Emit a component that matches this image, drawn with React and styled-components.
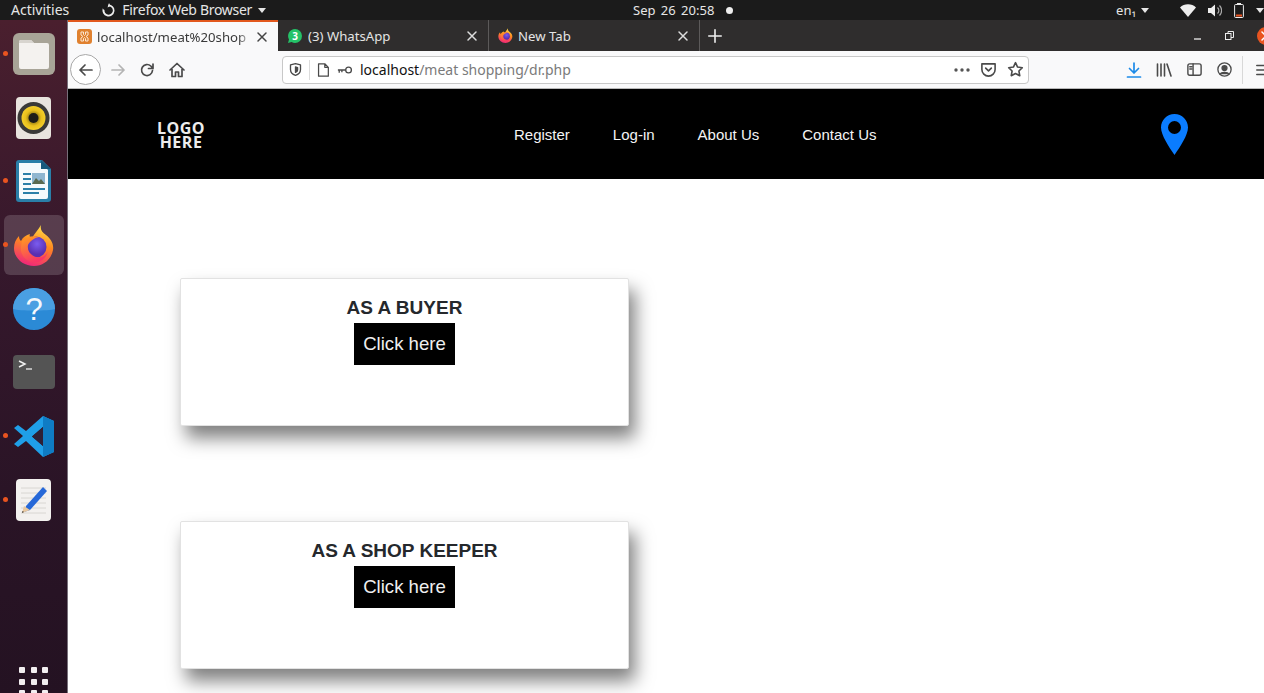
import React from 'react';
import styled, { createGlobalStyle } from 'styled-components';

const GlobalStyle = createGlobalStyle`
  html, body {
    margin: 0;
    padding: 0;
    height: 100%;
    overflow: hidden;
    background: #fff;
  }
  #root {
    height: 693px;
  }
`;

const uiFont = `"Noto Sans", "Open Sans", sans-serif`;
const pageFont = `"Liberation Sans", Arial, sans-serif`;

const Desktop = styled.div`
  width: 1264px;
  height: 693px;
  display: grid;
  grid-template-columns: minmax(0, 1fr);
  grid-template-rows: 20px 1fr;
  overflow: hidden;
`;

/* gnome top bar */
const TopBar = styled.div`
  display: grid;
  grid-template-columns: 633px auto 1fr;
  align-items: center;
  background: #1b1b1b;
  color: #e6e6e6;
  font: 13px/20px ${uiFont};
`;

const TopLeft = styled.div`
  display: flex;
  align-items: center;
  padding-left: 11px;
  font-size: 14px;
`;

const AppMenu = styled.div`
  display: flex;
  align-items: center;
  gap: 6px;
  margin-left: 32px;
  letter-spacing: -0.3px;
`;

const Caret = styled.span`
  width: 0;
  height: 0;
  border-left: 4.5px solid transparent;
  border-right: 4.5px solid transparent;
  border-top: 5px solid #e6e6e6;
`;

const Clock = styled.div`
  display: flex;
  align-items: center;
  gap: 12px;
  word-spacing: 2px;
`;

const RecDot = styled.span`
  width: 7px;
  height: 7px;
  border-radius: 50%;
  background: #eee;
`;

const TopRight = styled.div`
  display: flex;
  align-items: center;
  justify-content: flex-end;
  white-space: nowrap;
`;

const Lang = styled.div`
  display: flex;
  align-items: center;
  gap: 5px;
  margin-right: 31px;
`;

const Tray = styled.div`
  display: flex;
  align-items: center;
  gap: 12px;
`;

const Body = styled.div`
  display: grid;
  grid-template-columns: 67px minmax(0, 1fr);
  min-height: 0;
`;

/* launcher */
const Dock = styled.div`
  position: relative;
  display: flex;
  flex-direction: column;
  align-items: center;
  padding-top: 4px;
  background: linear-gradient(180deg, #4a1f2e 0%, #36182c 35%, #2a1426 70%, #241222 100%);
  border-right: 1px solid #77707a;
  box-sizing: content-box;
  width: 67px;
  margin-right: -1px;
`;

const DockItem = styled.div`
  position: relative;
  width: 60px;
  height: 60px;
  margin-bottom: 3.7px;
  display: flex;
  align-items: center;
  justify-content: center;
  border-radius: 6px;
  background: ${p => (p.$active ? 'rgba(255,255,255,0.16)' : 'transparent')};
`;

const RunDot = styled.span`
  position: absolute;
  left: -1px;
  top: 27px;
  width: 5px;
  height: 5px;
  border-radius: 50%;
  background: #e95420;
`;

const AppGrid = styled.div`
  position: absolute;
  left: 19px;
  top: 647px;
  display: grid;
  grid-template-columns: repeat(3, 6px);
  gap: 5.5px;
`;

const AppGridDot = styled.span`
  width: 6px;
  height: 6px;
  border-radius: 1px;
  background: #f2eef0;
`;

const Browser = styled.div`
  display: grid;
  grid-template-columns: minmax(0, 1fr);
  grid-template-rows: 31px 38px 90px 1fr;
  min-width: 0;
  background: #fff;
  z-index: 1;
  margin-left: 1px;
  overflow: hidden;
`;

/* tab strip */
const TabStrip = styled.div`
  display: flex;
  align-items: stretch;
  background: #2f2d2d;
  color: #e4e4e4;
  font: 13px ${uiFont};
`;

const Tab = styled.div`
  position: relative;
  box-sizing: border-box;
  width: ${p => p.$w}px;
  display: flex;
  align-items: center;
  gap: 5px;
  padding: 0 10px 0 9px;
  background: ${p => (p.$active ? '#f9f9fa' : 'transparent')};
  color: ${p => (p.$active ? '#3a3a3a' : '#e4e4e4')};
  border-top: ${p => (p.$active ? '2px solid #e2581d' : '0')};
  border-right: ${p => (p.$active ? '0' : '1px solid #5c5a5a')};
`;

const TabTitle = styled.span`
  flex: 1;
  min-width: 0;
  white-space: nowrap;
  overflow: hidden;
  font-size: 13.2px;
  mask-image: ${p => (p.$fade ? 'linear-gradient(90deg, #000 92%, transparent)' : 'none')};
`;

const NewTabButton = styled.div`
  width: 30px;
  display: flex;
  align-items: center;
  justify-content: center;
`;

const WindowControls = styled.div`
  margin-left: auto;
  display: flex;
  align-items: center;
  gap: 23px;
  margin-right: -11px;
`;

const CloseDot = styled.span`
  width: 18px;
  height: 18px;
  border-radius: 50%;
  background: #e95420;
  display: flex;
  align-items: center;
  justify-content: center;
`;

/* nav toolbar */
const Toolbar = styled.div`
  display: flex;
  align-items: center;
  background: #f9f9fa;
  border-bottom: 1px solid #b8b8b8;
  box-sizing: border-box;
  padding-left: 2px;
  height: 38px;
`;

const BackButton = styled.div`
  box-sizing: border-box;
  width: 31px;
  height: 31px;
  flex: none;
  border: 1px solid #a8a8a8;
  border-radius: 50%;
  background: #fff;
  display: flex;
  align-items: center;
  justify-content: center;
`;

const ToolButton = styled.div`
  width: ${p => p.$w || 30}px;
  flex: none;
  display: flex;
  align-items: center;
  justify-content: center;
`;

const UrlBar = styled.div`
  box-sizing: border-box;
  width: 747px;
  height: 28px;
  flex: none;
  margin-left: 88px;
  display: flex;
  align-items: center;
  background: #fff;
  border: 1px solid #c8c8c8;
  border-radius: 4px;
  padding: 0 4px 0 5px;
  font: 14px ${uiFont};
  color: #7a7a7a;
`;

const UrlDivider = styled.span`
  width: 1px;
  height: 20px;
  background: #dcdcdc;
  margin: 0 5px 0 6px;
`;

const KeyIcon = styled.svg`
  margin-left: 6px;
`;

const UrlText = styled.div`
  flex: 1;
  margin-left: 7px;
  white-space: nowrap;
`;

const UrlHost = styled.span`
  color: #111;
`;

const UrlActions = styled.div`
  display: flex;
  align-items: center;
  gap: 10px;
`;

const ToolbarRight = styled.div`
  display: flex;
  align-items: center;
  flex: none;
  margin-left: 90px;
`;

const ToolbarSep = styled.span`
  width: 1px;
  height: 28px;
  background: #d8d8d8;
  margin: 0 12px 0 3px;
`;

/* the site itself */
const SiteNav = styled.header`
  display: flex;
  align-items: center;
  background: #000;
  padding: 0 76px 0 89px;
`;

const Logo = styled.div`
  width: 357px;
  padding-top: 2px;
  color: #ececec;
  font: 700 16px/14px "Open Sans", ${pageFont};
  letter-spacing: 0.5px;
`;

const LogoLine = styled.div`
  width: 48px;
  text-align: center;
`;

const NavLinks = styled.nav`
  display: flex;
  gap: 43px;
`;

const NavLink = styled.a`
  color: #f4f4f4;
  font: 15px ${pageFont};
  text-decoration: none;
`;

const PinWrap = styled.div`
  margin-left: auto;
  display: flex;
`;

const Content = styled.main`
  display: flex;
  flex-direction: column;
  gap: 95px;
  padding: 99px 0 0 112px;
  background: #fff;
`;

const Card = styled.section`
  box-sizing: border-box;
  width: 449px;
  height: 148px;
  flex: none;
  padding-top: 17px;
  background: #fff;
  border: 1px solid #e2e2e2;
  border-radius: 2px;
  box-shadow: 6px 12px 18px rgba(0, 0, 0, 0.5);
  display: flex;
  flex-direction: column;
  align-items: center;
`;

const CardTitle = styled.h3`
  margin: 0 0 4px;
  color: #25282c;
  font: 700 19px/23px ${pageFont};
`;

const CardButton = styled.a`
  box-sizing: border-box;
  width: 101px;
  height: 42px;
  display: flex;
  align-items: center;
  justify-content: center;
  background: #000;
  color: #efefef;
  font: 18.6px ${pageFont};
  text-decoration: none;
`;

const stroke = { fill: 'none', strokeLinecap: 'round', strokeLinejoin: 'round' };

const FilesIcon = () => (
  <svg width="42" height="42" viewBox="0 0 42 42">
    <rect x="0" y="0" width="42" height="42" rx="6" fill="#a8a497" />
    <path d="M6 9a2 2 0 0 1 2-2h10l3 3h13a2 2 0 0 1 2 2v22a2 2 0 0 1-2 2H8a2 2 0 0 1-2-2z" fill="#f4f2ef" />
    <path d="M6 9a2 2 0 0 1 2-2h10l3 3H6z" fill="#d8d5cf" />
  </svg>
);

const RhythmboxIcon = () => (
  <svg width="36" height="42" viewBox="0 0 36 42">
    <defs>
      <radialGradient id="speakerCone">
        <stop offset="0.3" stopColor="#8c7414" />
        <stop offset="0.65" stopColor="#e8bf1c" />
        <stop offset="1" stopColor="#f4cf2a" />
      </radialGradient>
    </defs>
    <rect width="35" height="42" rx="4" fill="#e8e4de" />
    <circle cx="17.5" cy="21" r="16" fill="#3a3a38" />
    <circle cx="17.5" cy="21" r="12" fill="url(#speakerCone)" />
    <circle cx="17.5" cy="21" r="5" fill="#1d1c18" />
  </svg>
);

const WriterIcon = () => (
  <svg width="36" height="42" viewBox="0 0 36 42">
    <path d="M3 0h23l9 9v30a3 3 0 0 1-3 3H3a3 3 0 0 1-3-3V3a3 3 0 0 1 3-3z" fill="#2a7fa8" />
    <path d="M3 3h22l7 7v27a2 2 0 0 1-2 2H5a2 2 0 0 1-2-2z" fill="#f5fafc" />
    <path d="M25 0l10 9h-10z" fill="#17587c" />
    <path d="M7 14h8M7 19h8M7 24h8M7 29h22M7 33h16" stroke="#2a7fa8" strokeWidth="2" />
    <rect x="16" y="13" width="13" height="11" fill="#8fb6d0" />
    <path d="M16 24l4-6 3 3 2-2 4 5z" fill="#5a6a50" />
  </svg>
);

const FirefoxIcon = ({ size = 42 }) => (
  <svg width={size} height={size} viewBox="0 0 42 42">
    <defs>
      <linearGradient id="foxBody" x1="0.7" y1="0" x2="0.4" y2="1">
        <stop offset="0" stopColor="#ffe14a" />
        <stop offset="0.45" stopColor="#ff8a1f" />
        <stop offset="1" stopColor="#f0267a" />
      </linearGradient>
      <linearGradient id="foxHead" x1="0.2" y1="0" x2="0.6" y2="1">
        <stop offset="0" stopColor="#ff9a20" />
        <stop offset="1" stopColor="#f8306c" />
      </linearGradient>
      <radialGradient id="foxCore" cx="0.55" cy="0.35">
        <stop offset="0" stopColor="#7a5cf0" />
        <stop offset="1" stopColor="#5a2fb0" />
      </radialGradient>
    </defs>
    <path d="M28 1C27 6 29 8 33 11C38 15 41 20 40 26C38 36 30 42 21 42C10 42 1 34 1 24C1 19 3 15 6 12C6 15 7 16 8 17C10 13 13 11 17 10C16 12 17 14 19 14C22 9 25 6 28 1Z" fill="url(#foxBody)" />
    <circle cx="23" cy="23" r="10.5" fill="url(#foxCore)" />
    <path d="M9 17C13 13 20 11 26 13C21 14 17 17 15 21C14 26 17 31 23 33C28 34.5 33 32 35 27C33 36 26 39 20 38C12 37 7 30 8 23Z" fill="url(#foxHead)" />
  </svg>
);

const HelpIcon = () => (
  <svg width="42" height="42" viewBox="0 0 42 42">
    <circle cx="21" cy="21" r="21" fill="#2b8ad6" />
    <path d="M0 21a21 21 0 0 1 42 0c-6 2-36 2-42 0z" fill="#4a9fe2" />
    <text x="21" y="32" textAnchor="middle" fontFamily="Liberation Sans" fontSize="31" fill="#f4f8fc">?</text>
  </svg>
);

const TerminalIcon = () => (
  <svg width="42" height="34" viewBox="0 0 42 34">
    <rect width="42" height="34" rx="4" fill="#545454" />
    <path d="M6 6l6 3-6 3" stroke="#f0f0f0" strokeWidth="1.5" fill="none" />
    <path d="M13 14h6" stroke="#d8d8d8" strokeWidth="1.5" />
  </svg>
);

const VsCodeIcon = () => (
  <svg width="40" height="41" viewBox="0 0 40 41">
    <path d="M29 0l11 5v31l-11 5-17-16-8 6-4-3 9-8-9-8 4-3 8 6zM29 11L18 20.5 29 30z" fill="#1f9fe8" fillRule="evenodd" />
    <path d="M29 0l11 5v31l-11 5z M29 11v19" fill="#0f7cc4" fillRule="evenodd" />
    <path d="M29 11v19L18 20.5z" fill="#2f2036" />
  </svg>
);

const EditorIcon = () => (
  <svg width="35" height="42" viewBox="0 0 35 42">
    <rect width="35" height="42" rx="4" fill="#f3f1ef" />
    <path d="M5 9h25M5 14h25M5 19h25M5 24h25M5 29h25M5 34h25" stroke="#d8d6d2" strokeWidth="1" />
    <path d="M27 8l4 4-17 19-6 2 2-6z" fill="#2668d8" />
    <path d="M8 27l6 4-8 3z" fill="#e8c8a0" />
    <path d="M6.5 32l1.5 1-2 1z" fill="#333" />
  </svg>
);

const WhatsAppIcon = () => (
  <svg width="16" height="16" viewBox="0 0 16 16">
    <path d="M8 1a7 7 0 0 1 0 14 7 7 0 0 1-3.4-.9L1 15l1-3.5A7 7 0 0 1 8 1z" fill="#25c268" />
    <text x="8" y="11.5" textAnchor="middle" fontFamily="Noto Sans" fontWeight="700" fontSize="10" fill="#fff">3</text>
  </svg>
);

const XamppIcon = () => (
  <svg width="15" height="15" viewBox="0 0 15 15">
    <rect width="15" height="15" rx="3" fill="#e0812f" />
    <path d="M4 3h2.5v2.5L7.5 6.500 8.500 5.500V3H11v3l-2 1.500 2 1.500v3H8.500V9.500l-1-1-1 1V12H4V9l2-1.500L4 6z" fill="none" stroke="#fbe8d4" strokeWidth="1" />
  </svg>
);

const CloseX = ({ color }) => (
  <svg width="12" height="12" viewBox="0 0 12 12" stroke={color} strokeWidth="1.5" {...stroke}>
    <path d="M2 2l8 8M10 2l-8 8" />
  </svg>
);

const ToolIcon = ({ size = 18, color = '#4a4a4a', sw = 1.7, children }) => (
  <svg width={size} height={size} viewBox="0 0 18 18" stroke={color} strokeWidth={sw} {...stroke}>
    {children}
  </svg>
);

const dockApps = [
  { icon: <FilesIcon />, running: true },
  { icon: <RhythmboxIcon /> },
  { icon: <WriterIcon />, running: true },
  { icon: <FirefoxIcon />, running: true, active: true },
  { icon: <HelpIcon /> },
  { icon: <TerminalIcon /> },
  { icon: <VsCodeIcon />, running: true },
  { icon: <EditorIcon />, running: true },
];

const navItems = ['Register', 'Log-in', 'About Us', 'Contact Us'];
const cards = ['AS A BUYER', 'AS A SHOP KEEPER'];

export default function App() {
  return (
    <Desktop>
      <GlobalStyle />
      <TopBar>
        <TopLeft>
          Activities
          <AppMenu>
            <svg width="15" height="15" viewBox="0 0 15 15">
              <path d="M7.5 1.5a6 6 0 1 1-5.6 3.8c.3 1 1 1.5 1.6 1.6A4.200 4.200 0 1 0 7 3.3z" fill="#eee" />
              <path d="M8 0l1.5 3-3 1.5z" fill="#eee" />
            </svg>
            <span>Firefox Web Browser</span>
            <Caret />
          </AppMenu>
        </TopLeft>
        <Clock>
          <span>Sep 26 20:58</span>
          <RecDot />
        </Clock>
        <TopRight>
          <Lang>
            <span>en₁</span>
            <Caret />
          </Lang>
          <Tray>
            <svg width="16" height="13" viewBox="0 0 16 13">
              <path d="M0 3.5C4-.8 12-.8 16 3.5L8 13z" fill="#eee" />
            </svg>
            <svg width="14" height="13" viewBox="0 0 14 13">
              <path d="M0 4h3l4-3.5v12L3 9H0z" fill="#eee" />
              <path d="M9.5 3.5a4 4 0 0 1 0 6M11.5 1.5a7 7 0 0 1 0 10" stroke="#aaa" strokeWidth="1.2" fill="none" />
            </svg>
            <svg width="10" height="15" viewBox="0 0 10 15">
              <rect x="0.6" y="1.5" width="8.8" height="13" rx="1" fill="none" stroke="#eee" strokeWidth="1" />
              <rect x="3" y="0" width="4" height="1.5" fill="#eee" />
              <rect x="2" y="11.5" width="6" height="2" fill="#e95420" />
            </svg>
            <Caret />
          </Tray>
        </TopRight>
      </TopBar>

      <Body>
        <Dock>
          {dockApps.map((app, i) => (
            <DockItem key={i} $active={app.active}>
              {app.running && <RunDot />}
              {app.icon}
            </DockItem>
          ))}
          <AppGrid>
            {Array.from({ length: 9 }).map((_, i) => (
              <AppGridDot key={i} />
            ))}
          </AppGrid>
        </Dock>

        <Browser>
          <TabStrip>
            <Tab $active $w={210}>
              <XamppIcon />
              <TabTitle $fade>localhost/meat%20shop</TabTitle>
              <CloseX color="#444" />
            </Tab>
            <Tab $w={211}>
              <WhatsAppIcon />
              <TabTitle>(3) WhatsApp</TabTitle>
              <CloseX color="#ddd" />
            </Tab>
            <Tab $w={211}>
              <FirefoxIcon size={15} />
              <TabTitle>New Tab</TabTitle>
              <CloseX color="#ddd" />
            </Tab>
            <NewTabButton>
              <ToolIcon size={16} color="#eee" sw={1.8}>
                <path d="M9 2v14M2 9h14" />
              </ToolIcon>
            </NewTabButton>
            <WindowControls>
              <svg width="9" height="9" viewBox="0 0 9 9">
                <path d="M1 8h7" stroke="#eee" strokeWidth="1.3" />
              </svg>
              <svg width="9" height="9" viewBox="0 0 9 9" fill="none" stroke="#eee" strokeWidth="1">
                <rect x="0.5" y="2.5" width="5.5" height="6" />
                <path d="M3 2.5V.5h5.5V6.5H6" />
              </svg>
              <CloseDot>
                <CloseX color="#fff" />
              </CloseDot>
            </WindowControls>
          </TabStrip>

          <Toolbar>
            <BackButton>
              <ToolIcon>
                <path d="M15 9H3M8 4L3 9l5 5" />
              </ToolIcon>
            </BackButton>
            <ToolButton $w={33}>
              <ToolIcon color="#b4b4b4">
                <path d="M3 9h12M10 4l5 5-5 5" />
              </ToolIcon>
            </ToolButton>
            <ToolButton $w={26}>
              <ToolIcon>
                <path d="M14.5 9.5A5.5 5.5 0 1 1 12.8 5L15 7.5M15 3v4.5h-4.5" />
              </ToolIcon>
            </ToolButton>
            <ToolButton $w={34}>
              <ToolIcon>
                <path d="M2 9l7-6.5L16 9M4 8v7.5h3.5V11h3v4.5H14V8" />
              </ToolIcon>
            </ToolButton>
            <UrlBar>
              <ToolIcon size={15} sw={1.6}>
                <path d="M9 2l6 1.5V9c0 3.5-3 6-6 7-3-1-6-3.5-6-7V3.5z" />
                <path d="M9 6l2.5.7V9.500c0 1.300-1 2.300-2.500 3z" fill="#4a4a4a" />
              </ToolIcon>
              <UrlDivider />
              <ToolIcon size={16} sw={1.4}>
                <path d="M4 2h7l4 4v10H4zM11 2v4h4" />
              </ToolIcon>
              <KeyIcon width="16" height="10" viewBox="0 0 18 10" fill="none" stroke="#4a4a4a" strokeWidth="1.5">
                <circle cx="13" cy="5" r="3.2" />
                <path d="M10 5H1M2.5 5v3M5.5 5v2.5" />
              </KeyIcon>
              <UrlText>
                <UrlHost>localhost</UrlHost>/meat shopping/dr.php
              </UrlText>
              <UrlActions>
                <svg width="16" height="4" viewBox="0 0 16 4" fill="#555">
                  <circle cx="2" cy="2" r="1.7" />
                  <circle cx="8" cy="2" r="1.7" />
                  <circle cx="14" cy="2" r="1.7" />
                </svg>
                <ToolIcon size={17}>
                  <path d="M2 3h14v6a7 7 0 0 1-14 0zM6 7.5l3 3 3-3" />
                </ToolIcon>
                <ToolIcon size={17}>
                  <path d="M9 1.8l2.2 4.6 5 .7-3.6 3.5.9 5L9 13.2l-4.5 2.4.9-5L1.8 7.1l5-.7z" />
                </ToolIcon>
              </UrlActions>
            </UrlBar>
            <ToolbarRight>
              <ToolButton>
                <ToolIcon color="#1c8ae8">
                  <path d="M9 2v10M4.5 7.5L9 12l4.5-4.5M2.5 16h13" />
                </ToolIcon>
              </ToolButton>
              <ToolButton>
                <ToolIcon sw={1.6}>
                  <path d="M2.5 3v12M6 3v12M9.5 3v12M12 3l4 12" />
                </ToolIcon>
              </ToolButton>
              <ToolButton>
                <ToolIcon size={17} sw={1.5}>
                  <rect x="2" y="3" width="14" height="12" rx="2" />
                  <path d="M7.5 3v12M4 6h2M4 8.5h2" />
                </ToolIcon>
              </ToolButton>
              <ToolButton>
                <ToolIcon size={17} sw={1.4}>
                  <circle cx="9" cy="9" r="7" />
                  <circle cx="9" cy="7.5" r="2.6" fill="#4a4a4a" />
                  <path d="M4.5 14c1-2.5 8-2.5 9 0" fill="#4a4a4a" />
                </ToolIcon>
              </ToolButton>
              <ToolbarSep />
              <ToolIcon size={16}>
                <path d="M2 4h14M2 9h14M2 14h14" />
              </ToolIcon>
            </ToolbarRight>
          </Toolbar>

          <SiteNav>
            <Logo>
              <LogoLine>LOGO</LogoLine>
              <LogoLine>HERE</LogoLine>
            </Logo>
            <NavLinks>
              {navItems.map(item => (
                <NavLink key={item} href="#">{item}</NavLink>
              ))}
            </NavLinks>
            <PinWrap>
              <svg width="27" height="41" viewBox="0 0 27 41">
                <path
                  d="M13.5 0C6 0 0 6 0 13.5 0 21 8 33 13.5 41 19 33 27 21 27 13.5 27 6 21 0 13.5 0zm0 7a6.5 6.5 0 1 1 0 13 6.5 6.5 0 0 1 0-13z"
                  fill="#0a7cff"
                  fillRule="evenodd"
                />
              </svg>
            </PinWrap>
          </SiteNav>

          <Content>
            {cards.map(title => (
              <Card key={title}>
                <CardTitle>{title}</CardTitle>
                <CardButton href="#">Click here</CardButton>
              </Card>
            ))}
          </Content>
        </Browser>
      </Body>
    </Desktop>
  );
}
